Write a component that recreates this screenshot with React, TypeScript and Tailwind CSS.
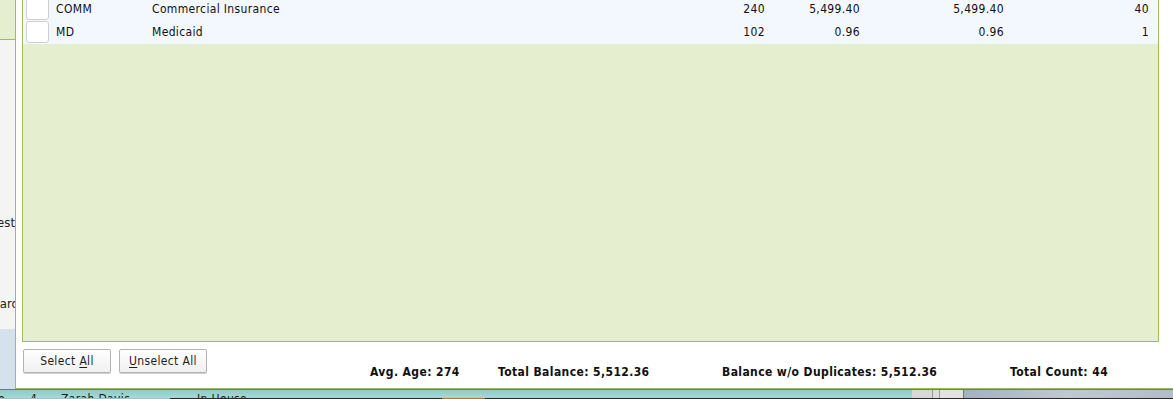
import React from "react";

const rows = [
  { code: "COMM", desc: "Commercial Insurance", a: "240", b: "5,499.40", c: "5,499.40", d: "40", h: "h-[23px]" },
  { code: "MD", desc: "Medicaid", a: "102", b: "0.96", c: "0.96", d: "1", h: "h-[24px]" },
];

function Btn({ pre, u, post }: { pre: string; u: string; post: string }) {
  return (
    <div className="w-[88px] h-[24px] flex items-center justify-center rounded-[2px] border border-[#b4b4b4] bg-gradient-to-b from-[#ffffff] to-[#f0f0f0] shadow-[0_1px_0_#d0d0d0] text-[12px] tracking-[0.35px] text-[#1e1e1e]">
      <span>
        {pre}
        <span className="underline underline-offset-2">{u}</span>
        {post}
      </span>
    </div>
  );
}

export default function App() {
  return (
    <div
      className="w-[1173px] h-[399px] overflow-hidden flex flex-col bg-white text-[#101010]"
      style={{ fontFamily: '"DejaVu Sans Condensed", "DejaVu Sans", sans-serif' }}
    >
      <div className="flex h-[389px] shrink-0">
        {/* left strip */}
        <div className="w-[15px] shrink-0 flex flex-col overflow-hidden">
          <div className="h-[40px] bg-[#e5efd0] border-b border-[#9dbd5a]" />
          <div className="flex-1 bg-[#f4f4f4] relative text-[13px] text-[#222]">
            <div className="h-[173px]" />
            <div className="flex justify-end whitespace-nowrap">rest</div>
            <div className="h-[61px]" />
            <div className="flex justify-end whitespace-nowrap -mr-[4px]">Hard</div>
          </div>
          <div className="h-[60px] bg-[#d5e1ed]" />
        </div>
        {/* main panel */}
        <div className="flex-1 border-l border-b border-[#9dbd5a] flex flex-col pl-[6px]">
          <div className="w-[1137px] h-[342px] shrink-0 bg-[#e5efd0] border-l border-r border-b border-[#9dbd5a] overflow-hidden">
            <div className="-mt-[3px] flex flex-col">
              {rows.map((r) => (
                <div key={r.code} className={`${r.h} bg-[#f3f7fe] flex items-center text-[12px] tracking-[0.35px] pr-[7px]`}>
                  <div className="ml-[3px] w-[23px] h-[22px] bg-white border border-[#cfcfcf] rounded-[3px] shrink-0" />
                  <div className="ml-[7px] w-[96px] shrink-0">{r.code}</div>
                  <div className="w-[500px] shrink-0">{r.desc}</div>
                  <div className="w-[113px] shrink-0 text-right">{r.a}</div>
                  <div className="w-[95px] shrink-0 text-right">{r.b}</div>
                  <div className="w-[144px] shrink-0 text-right">{r.c}</div>
                  <div className="w-[145px] shrink-0 text-right">{r.d}</div>
                </div>
              ))}
            </div>
          </div>
          <div className="flex-1 flex items-start pt-[7px] pl-[1px]">
            <Btn pre="Select " u="A" post="ll" />
            <div className="w-[8px]" />
            <Btn pre="" u="U" post="nselect All" />
            <div className="flex mt-[14px] ml-[163px] text-[12px] tracking-[0.4px] font-bold text-[#101010] whitespace-nowrap">
              <div className="w-[128px]">Avg. Age: 274</div>
              <div className="w-[224px]">Total Balance: 5,512.36</div>
              <div className="w-[288px]">Balance w/o Duplicates: 5,512.36</div>
              <div>Total Count: 44</div>
            </div>
          </div>
        </div>
      </div>
      {/* bottom taskbar strip */}
      <div className="h-[10px] flex flex-col shrink-0">
        <div className="h-[1px] bg-[#6b7b86]" />
        <div className="flex h-[8px] overflow-hidden">
          <div className="w-[912px] shrink-0 bg-gradient-to-b from-[#8ccbc7] to-[#a6d9d5] overflow-hidden text-[12px] tracking-[0.35px] text-[#1a1a1a]">
            <div className="flex whitespace-nowrap mt-[0px]">
              <div className="w-[30px] shrink-0 -ml-[9px]">no</div>
              <div className="w-[40px] shrink-0 pl-[9px]">4</div>
              <div className="w-[136px] shrink-0">Zarah Davis</div>
              <div>In House</div>
            </div>
          </div>
          <div className="w-[20px] shrink-0 bg-[#d8d8d8]" />
          <div className="w-[1px] bg-[#9a9a9a]" />
          <div className="w-[6px] bg-[#dcdcdc]" />
          <div className="w-[1px] bg-[#9a9a9a]" />
          <div className="w-[23px] bg-[#e2e2e2]" />
          <div className="w-[1px] bg-[#6f7f5a]" />
          <div className="flex-1 bg-gradient-to-r from-[#a3b1c2] via-[#c0c8d3] to-[#b2bdca]" />
        </div>
        <div className="h-[1px] flex">
          <div className="w-[170px] bg-[#8ccbc7]" />
          <div className="w-[272px] bg-[#2a2a22]" />
          <div className="w-[43px] bg-[#c86a20]" />
          <div className="flex-1 bg-[#2a2a22]" />
        </div>
      </div>
    </div>
  );
}
